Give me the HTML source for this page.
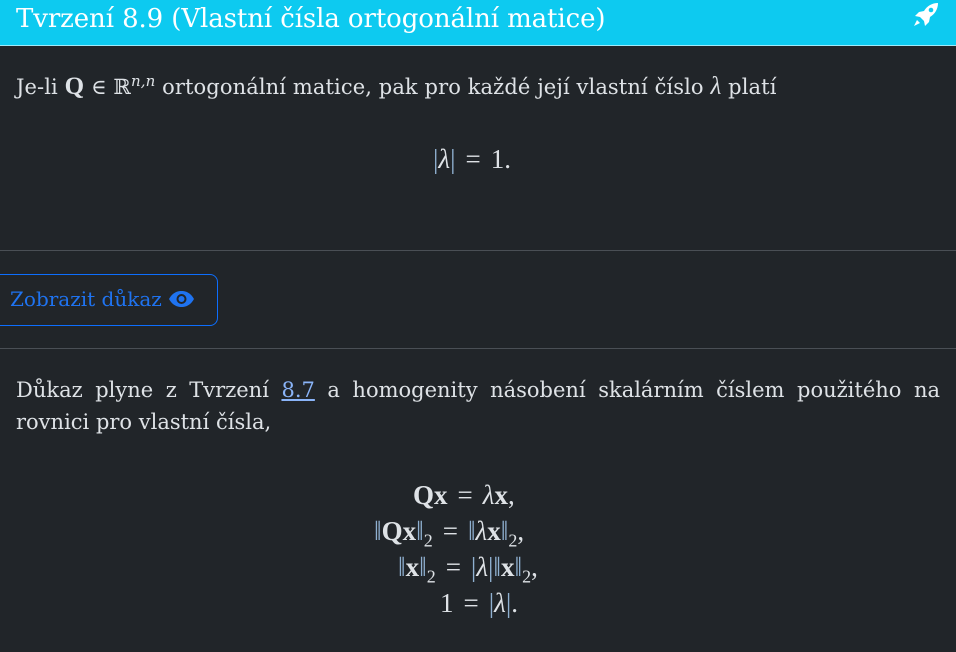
<!DOCTYPE html>
<html><head><meta charset="utf-8"><style>
body{margin:0;width:956px;height:652px;background:#212529;color:#dee2e6;font-family:"DejaVu Serif",serif;overflow:hidden;position:relative}
.hdr{position:absolute;left:0;top:0;width:956px;height:45px;background:#0dcaf0;border-bottom:1px solid #9eeaf9}
.hdr .t{position:absolute;left:16px;top:4px;font-size:26px;color:#fff;white-space:nowrap;letter-spacing:-0.1px}
.p{position:absolute;left:16px;font-size:21px;white-space:nowrap}
.hr{position:absolute;left:0;width:956px;height:1px;background:#4a4f55}
.btn{position:absolute;left:-10px;top:274px;width:228px;height:52px;border:1px solid #0d6efd;border-radius:8px;box-sizing:border-box}
.btn span{position:absolute;left:19px;top:12px;font-size:20px;color:#1f73f0;white-space:nowrap}
.eq{position:absolute;font-size:27px;white-space:nowrap;font-family:"Liberation Serif",serif}
.b{font-weight:bold}
.i{font-style:italic}
.bar{color:#8fb0d0}
.o{margin:0 10px}
sub{font-size:18px}
</style></head><body>
<div class="hdr"><div class="t">Tvrzení 8.9 (Vlastní čísla ortogonální matice)</div>
<svg style="position:absolute;left:911px;top:2px" width="30" height="26" viewBox="0 0 30 26"><path d="M27 1c-6 0-11 3-14 8l-5 1-4 4 5 1 4 4 1 5 4-4 1-5c5-3 8-8 8-14z" fill="#fff"/><circle cx="20" cy="8" r="2.3" fill="#0dcaf0"/><path d="M6 18l-3 6 6-3z" fill="#fff"/></svg></div>
<div class="p" style="top:72px;letter-spacing:0.1px">Je-li <span class="b" style="font-family:'Liberation Serif';font-size:25px">Q</span> ∈ ℝ<sup style="font-size:15px" class="i">n,n</sup> ortogonální matice, pak pro každé její vlastní číslo <span class="i" style="font-family:'Liberation Serif';font-size:25px">λ</span> platí</div>
<div class="eq" style="left:433px;top:144px"><span class="bar">|</span><span class="i">λ</span><span class="bar">|</span><span class="o">=</span>1.</div>
<div class="hr" style="top:250px"></div>
<div class="btn"><span>Zobrazit důkaz <svg width="27" height="18" viewBox="0 0 27 18" style="vertical-align:-2px"><path d="M1 9C5 2 10 1 13.5 1S22 2 26 9c-4 7-9 8-12.5 8S5 16 1 9z" fill="#1f73f0"/><circle cx="13.5" cy="9" r="5" fill="#212529"/><circle cx="13.5" cy="9" r="3" fill="#1f73f0"/></svg></span></div>
<div class="hr" style="top:348px"></div>
<div class="p" style="top:374px;width:924px;white-space:normal;text-align:justify;line-height:32px">Důkaz plyne z Tvrzení <span style="color:#8ab4f8;text-decoration:underline">8.7</span> a homogenity násobení skalárním číslem použitého na rovnici pro vlastní čísla,</div>
<div class="eq" style="left:413px;top:480px"><span class="b">Qx</span><span class="o">=</span><span class="i">λ</span><span class="b">x</span>,</div>
<div class="eq" style="left:374px;top:516px"><span class="bar">‖</span><span class="b">Qx</span><span class="bar">‖</span><sub>2</sub><span class="o">=</span><span class="bar">‖</span><span class="i">λ</span><span class="b">x</span><span class="bar">‖</span><sub>2</sub>,</div>
<div class="eq" style="left:398px;top:552px"><span class="bar">‖</span><span class="b">x</span><span class="bar">‖</span><sub>2</sub><span class="o">=</span><span class="bar">|</span><span class="i">λ</span><span class="bar">|‖</span><span class="b">x</span><span class="bar">‖</span><sub>2</sub>,</div>
<div class="eq" style="left:440px;top:588px">1<span class="o">=</span><span class="bar">|</span><span class="i">λ</span><span class="bar">|</span>.</div>
</body></html>
